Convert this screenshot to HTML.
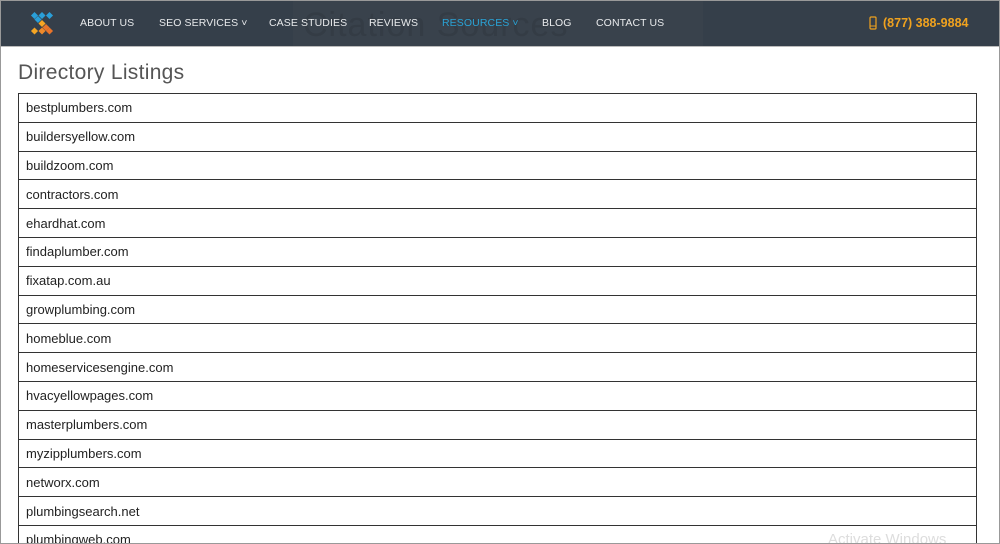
<!DOCTYPE html>
<html><head><meta charset="utf-8"><style>
*{margin:0;padding:0;box-sizing:border-box}
html,body{width:1000px;height:544px;overflow:hidden}
body{background:#fff;font-family:"Liberation Sans",sans-serif;position:relative}
.frame{position:absolute;left:0;top:0;width:1000px;height:544px;border:1px solid #999;pointer-events:none;z-index:9}
.hdr{position:absolute;left:0;top:0;width:1000px;height:47px;background:#353f4a;border-bottom:1px solid #bbb;overflow:hidden}
.ghost{position:absolute;left:293px;top:0;width:410px;height:46px;background:#39424c}
.ghost span{position:absolute;left:10px;top:6px;font-size:34px;color:#343c45;letter-spacing:1px}
.nav{position:absolute;top:17px;font-size:10.5px;color:#e8eaec;letter-spacing:.1px;white-space:nowrap}
.phone{position:absolute;left:883px;top:16px;font-size:12.5px;font-weight:bold;color:#f0a21e}
h1{position:absolute;left:18px;top:61px;font-weight:normal;font-size:21px;color:#555;letter-spacing:.3px}
table{position:absolute;left:18px;top:93px;width:959px;border-collapse:collapse}
td{border:1px solid #333;height:28.8px;padding:0 7px;font-size:13px;color:#222}
.wm{position:absolute;left:828px;top:531px;font-size:15px;color:#ddd}
</style></head><body>
<div class="hdr">
<div class="ghost"><span>Citation Sources</span></div>
<svg style="position:absolute;left:29px;top:10px" width="26" height="26" viewBox="0 0 26 26">
<g fill="#2a9fd8"><rect x="3" y="3" width="5" height="5" transform="rotate(45 5.5 5.5)"/><rect x="10.5" y="3" width="5" height="5" transform="rotate(45 13 5.5)"/><rect x="18" y="3" width="5" height="5" transform="rotate(45 20.5 5.5)"/><rect x="6.5" y="7" width="5" height="5" transform="rotate(45 9 9.5)"/></g>
<g fill="#f6a623"><rect x="10.5" y="11" width="5" height="5" transform="rotate(45 13 13.5)"/><rect x="14.5" y="15" width="5" height="5" fill="#e8742a" transform="rotate(45 17 17.5)"/><rect x="3" y="18.5" width="5" height="5" transform="rotate(45 5.5 21)"/><rect x="10.5" y="18.5" width="5" height="5" fill="#ef8a2a" transform="rotate(45 13 21)"/><rect x="18" y="18.5" width="5" height="5" fill="#e8742a" transform="rotate(45 20.5 21)"/></g>
</svg>
<div class="nav" style="left:80px">ABOUT US</div>
<div class="nav" style="left:159px">SEO SERVICES ˅</div>
<div class="nav" style="left:269px">CASE STUDIES</div>
<div class="nav" style="left:369px">REVIEWS</div>
<div class="nav" style="left:442px;color:#2aa3d6">RESOURCES ˅</div>
<div class="nav" style="left:542px">BLOG</div>
<div class="nav" style="left:596px">CONTACT US</div>
<svg style="position:absolute;left:869px;top:16px" width="8" height="14" viewBox="0 0 8 14"><rect x="1" y="1" width="6" height="12" rx="1" fill="none" stroke="#f0a21e" stroke-width="1.2"/><line x1="1" y1="10" x2="7" y2="10" stroke="#f0a21e"/></svg>
<div class="phone">(877) 388-9884</div>
</div>
<h1>Directory Listings</h1>
<table>
<tr><td>bestplumbers.com</td></tr>
<tr><td>buildersyellow.com</td></tr>
<tr><td>buildzoom.com</td></tr>
<tr><td>contractors.com</td></tr>
<tr><td>ehardhat.com</td></tr>
<tr><td>findaplumber.com</td></tr>
<tr><td>fixatap.com.au</td></tr>
<tr><td>growplumbing.com</td></tr>
<tr><td>homeblue.com</td></tr>
<tr><td>homeservicesengine.com</td></tr>
<tr><td>hvacyellowpages.com</td></tr>
<tr><td>masterplumbers.com</td></tr>
<tr><td>myzipplumbers.com</td></tr>
<tr><td>networx.com</td></tr>
<tr><td>plumbingsearch.net</td></tr>
<tr><td>plumbingweb.com</td></tr>
</table>
<div class="wm">Activate Windows</div>
<div class="frame"></div>
</body></html>
